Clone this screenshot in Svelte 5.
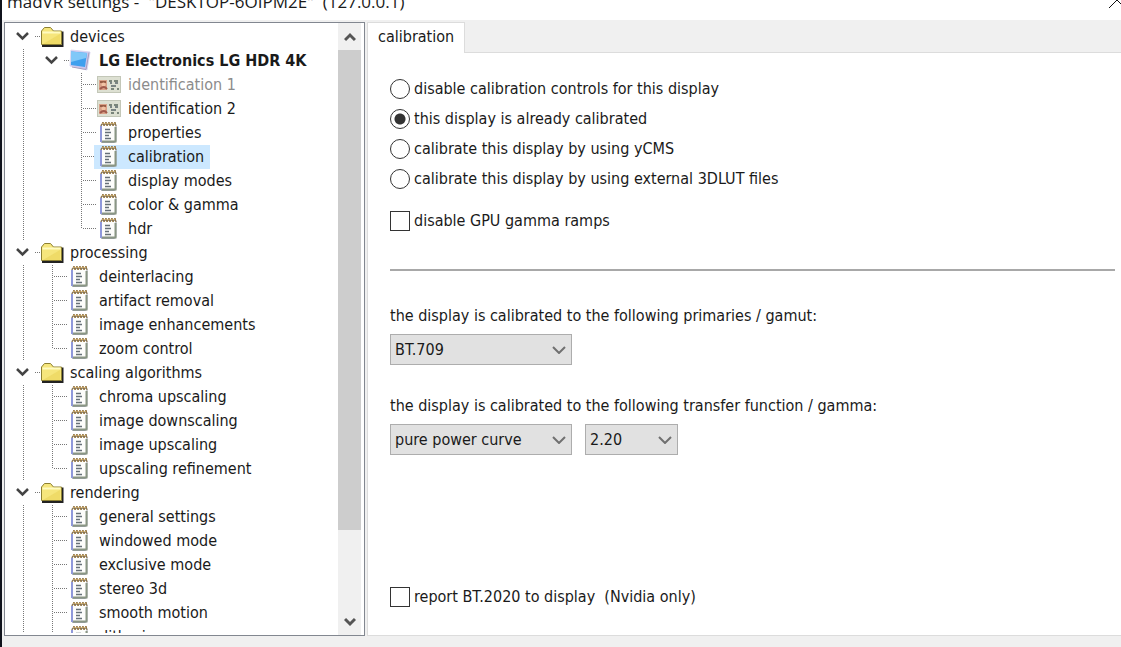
<script>
	const tree = [
		{ label: 'devices', icon: 'folder', guides: ['open'] },
		{ label: 'LG Electronics LG HDR 4K', icon: 'display', guides: ['line', 'open'], bold: true },
		{ label: 'identification 1', icon: 'card', guides: ['line', 'blank', 'tee'], muted: true },
		{ label: 'identification 2', icon: 'card', guides: ['line', 'blank', 'tee'] },
		{ label: 'properties', icon: 'page', guides: ['line', 'blank', 'tee'] },
		{ label: 'calibration', icon: 'page', guides: ['line', 'blank', 'tee'] },
		{ label: 'display modes', icon: 'page', guides: ['line', 'blank', 'tee'] },
		{ label: 'color & gamma', icon: 'page', guides: ['line', 'blank', 'tee'] },
		{ label: 'hdr', icon: 'page', guides: ['line', 'blank', 'end'] },
		...group('processing', ['deinterlacing', 'artifact removal', 'image enhancements', 'zoom control']),
		...group('scaling algorithms', [
			'chroma upscaling',
			'image downscaling',
			'image upscaling',
			'upscaling refinement'
		]),
		...group('rendering', [
			'general settings',
			'windowed mode',
			'exclusive mode',
			'stereo 3d',
			'smooth motion',
			'dithering'
		])
	];

	const modes = [
		'disable calibration controls for this display',
		'this display is already calibrated',
		'calibrate this display by using yCMS',
		'calibrate this display by using external 3DLUT files'
	];

	let selected = $state('calibration');
	let mode = $state(modes[1]);
	let disableRamps = $state(false);
	let reportBt2020 = $state(false);
	let gamut = $state('BT.709');
	let curve = $state('pure power curve');
	let gamma = $state('2.20');

	function group(label, children) {
		return [
			{ label, icon: 'folder', guides: ['open'] },
			...children.map((child, i) => ({
				label: child,
				icon: 'page',
				guides: ['line', i === children.length - 1 ? 'end' : 'tee']
			}))
		];
	}
</script>

{#snippet guide(kind)}
	<svg class="guide" viewBox="0 0 29 24" aria-hidden="true">
		{#if kind === 'open'}
			<path class="chevron" d="M10 8l5.500 5.500 5.500-5.500" />
			<path class="dots" d="M28 11.500h5" />
		{:else if kind === 'line'}
			<path class="dots" d="M16.500 0v24" />
		{:else if kind === 'tee'}
			<path class="dots" d="M16.500 0v24M18 11.500h14" />
		{:else if kind === 'end'}
			<path class="dots" d="M16.500 0v12M18 11.500h14" />
		{/if}
	</svg>
{/snippet}

{#snippet icon(kind)}
	<svg class="icon" viewBox="0 0 32 24" aria-hidden="true">
		{#if kind === 'folder'}
			<path d="M6 21h20.500V6.500" fill="none" stroke="#222" stroke-width="2" />
			<path d="M5.500 19.500V6l3-3.500h6l3 3.500h8v13.500z" fill="#f6e67c" stroke="#8c8032" />
			<path d="M6.500 7.500h18" stroke="#fffbc0" stroke-width="2" />
			<path d="M7 19l17-10v10z" fill="#e8d052" opacity="0.5" />
		{:else if kind === 'display'}
			<path d="M6 1l19 2-3 18L5 17z" fill="#c9c6ee" stroke="#dcd8f2" />
			<path d="M6 2.500l16 1.500-2 14L6 16z" fill="#3fa0ee" />
			<path d="M6 2.500l16 1.500-1 5L6 13z" fill="#80c8f8" />
			<path d="M7 18l14 2.500 3-17" fill="none" stroke="#a9a0bd" />
		{:else if kind === 'card'}
			<rect x="3.500" y="3.500" width="23" height="16" fill="#dde0d2" stroke="#c3c7b8" />
			<rect x="5" y="7" width="8" height="10" fill="#d9a188" />
			<path d="M6 8h6v2H6z" fill="#985c45" />
			<circle cx="9.500" cy="11.500" r="2" fill="#f1c3a4" />
			<path d="M6 16q4-4 7 0" fill="none" stroke="#a05a4c" stroke-width="2" />
			<path d="M15 8h3m2 0h4M17 16h3m3 0h2" stroke="#7a857a" stroke-width="2" />
			<path d="M16 10h2m3 0h3M17 13h5" stroke="#59656a" stroke-width="1.500" />
		{:else}
			<path d="M7 3.500h15v17l-2 1H7.500L6.500 20z" fill="#fdfdfb" stroke="#9ba0a8" />
			<path d="M7 5v16" stroke="#8f98da" stroke-width="2" />
			<path d="M21.500 6v14.500H8" fill="none" stroke="#8a9684" stroke-width="2" />
			<path d="M7 5l2-4 1 4 2-4 1 4 2-4 1 4 2-4 1 4 2-4 1 4" fill="none" stroke="#8b6c37" />
			<path d="M8 2.500h13" stroke="#d6b26a" opacity="0.6" />
			<path d="M11 8.500h5M11 11.500h6M11 14.500h4M11 17.500h6" stroke="#667078" stroke-width="1.500" />
		{/if}
	</svg>
{/snippet}

{#snippet arrow()}
	<svg class="arrow" viewBox="0 0 14 8" aria-hidden="true">
		<path d="M1 1l6 6 6-6" />
	</svg>
{/snippet}

<div class="window">
	<header>
		<span>madVR settings -&nbsp; "DESKTOP-6OIPM2E"&nbsp; (127.0.0.1)</span>
		<button class="close" aria-label="Close">
			<svg viewBox="0 0 16 16"><path d="M0 16l8-8 8 8M0 0l8 8 8-8" /></svg>
		</button>
	</header>

	<main>
		<nav>
			<ul>
				{#each tree as item}
					<li>
						{#each item.guides as kind}
							{@render guide(kind)}
						{/each}
						<button
							class="node"
							class:selected={selected === item.label}
							class:bold={item.bold}
							class:muted={item.muted}
							onclick={() => (selected = item.label)}
						>
							{@render icon(item.icon)}
							<span>{item.label}</span>
						</button>
					</li>
				{/each}
			</ul>
			<div class="scrollbar">
				<button aria-label="Scroll up">
					<svg viewBox="0 0 12 10"><path d="M1 8l5-5 5 5" /></svg>
				</button>
				<div class="track"><div class="thumb"></div></div>
				<button aria-label="Scroll down">
					<svg viewBox="0 0 12 10"><path d="M1 2l5 5 5-5" /></svg>
				</button>
			</div>
		</nav>

		<section>
			<div class="tabs">
				<button class="tab">calibration</button>
			</div>
			<form class="panel">
				{#each modes as value}
					<label class="option">
						<input type="radio" name="mode" {value} bind:group={mode} />
						{value}
					</label>
				{/each}
				<label class="option ramps">
					<input type="checkbox" bind:checked={disableRamps} />
					disable GPU gamma ramps
				</label>

				<hr />

				<label class="caption" for="gamut">the display is calibrated to the following primaries / gamut:</label>
				<div class="fields">
					<div class="select wide">
						<select id="gamut" bind:value={gamut}>
							<option>BT.709</option>
							<option>BT.2020</option>
						</select>
						{@render arrow()}
					</div>
				</div>

				<label class="caption" for="curve">the display is calibrated to the following transfer function / gamma:</label>
				<div class="fields">
					<div class="select wide">
						<select id="curve" bind:value={curve}>
							<option>pure power curve</option>
						</select>
						{@render arrow()}
					</div>
					<div class="select">
						<select aria-label="gamma" bind:value={gamma}>
							<option>2.20</option>
							<option>2.40</option>
						</select>
						{@render arrow()}
					</div>
				</div>

				<label class="option report">
					<input type="checkbox" bind:checked={reportBt2020} />
					report BT.2020 to display&nbsp; (Nvidia only)
				</label>
			</form>
		</section>
	</main>
</div>

<style>
	:global(body) {
		margin: 0;
	}

	.window {
		display: flex;
		flex-direction: column;
		height: 100vh;
		box-sizing: border-box;
		border-left: 2px solid #10131c;
		background: #f0f0f0;
		color: #1a1a1a;
		font: 16px/24px Tahoma, 'DejaVu Sans Condensed', sans-serif;
		overflow: hidden;
	}

	button,
	select {
		padding: 0;
		border: 0;
		background: none;
		color: inherit;
		font: inherit;
	}

	header {
		display: flex;
		justify-content: space-between;
		align-items: flex-end;
		height: 20px;
		padding-left: 5px;
		background: #fff;
		font: 17px/36px 'Segoe UI', 'Open Sans', sans-serif;
		white-space: pre;
		overflow: hidden;
	}

	.close {
		align-self: flex-start;
		width: 12px;
		height: 8px;
		overflow: hidden;
	}

	.close svg {
		display: block;
		width: 16px;
		height: 16px;
		margin-top: -8px;
		fill: none;
		stroke: #111;
	}

	main {
		display: flex;
		flex: 1;
		gap: 2px;
		min-height: 0;
		padding: 2px 0 11px 2px;
	}

	nav {
		display: flex;
		flex: none;
		width: 359px;
		border: 1px solid #828790;
		background: #fff;
	}

	ul {
		flex: 1;
		margin: 0 0 2px;
		padding: 2px 0 0 2px;
		list-style: none;
		overflow: hidden;
	}

	li {
		display: flex;
		height: 24px;
	}

	.guide {
		flex: none;
		width: 29px;
		height: 24px;
		fill: none;
		overflow: visible;
	}

	.dots {
		stroke: #777;
		stroke-dasharray: 1 1;
	}

	.chevron {
		stroke: #444;
		stroke-width: 2.5;
	}

	.node {
		display: flex;
		padding-right: 6px;
		white-space: nowrap;
	}

	.icon {
		width: 32px;
		height: 24px;
		margin-right: 2px;
	}

	.selected {
		background: #cce8ff;
	}

	.bold {
		font-weight: bold;
	}

	.muted {
		color: #8c8c8c;
	}

	.scrollbar {
		display: flex;
		flex-direction: column;
		width: 23px;
		margin-right: 3px;
		background: #f0f0f0;
	}

	.scrollbar button {
		display: grid;
		place-items: center;
		height: 27px;
	}

	.scrollbar svg {
		width: 12px;
		height: 10px;
		fill: none;
		stroke: #555;
		stroke-width: 3;
	}

	.track {
		flex: 1;
	}

	.thumb {
		height: 86%;
		background: #cdcdcd;
	}

	section {
		display: flex;
		flex: 1;
		flex-direction: column;
		min-width: 0;
	}

	.tabs {
		display: flex;
		height: 30px;
		border-bottom: 1px solid #dcdcdc;
	}

	.tab {
		height: 31px;
		padding: 0 10px 2px;
		border: 1px solid #dcdcdc;
		border-bottom: 0;
		background: #fff;
	}

	.panel {
		flex: 1;
		padding: 21px 6px 0 22px;
		border: 1px solid #dcdcdc;
		border-width: 0 0 1px 1px;
		background: #fff;
	}

	.option {
		display: flex;
		align-items: center;
		gap: 4px;
		width: max-content;
		height: 30px;
	}

	.option input {
		appearance: none;
		width: 20px;
		height: 20px;
		margin: 0;
		border: 1px solid #333;
		background: #fff;
	}

	.option input[type='radio'] {
		border-radius: 50%;
	}

	.option input[type='radio']:checked {
		background: radial-gradient(circle, #333 5px, #fff 6px);
	}

	.option input[type='checkbox']:checked {
		background: #333;
		box-shadow: inset 0 0 0 4px #fff;
	}

	.ramps {
		margin-top: 12px;
	}

	hr {
		height: 2px;
		margin: 33px 0;
		border: 0;
		background: #a8a8a8;
	}

	.caption {
		display: block;
		height: 30px;
	}

	.fields {
		display: flex;
		gap: 13px;
		margin-bottom: 29px;
	}

	.select {
		display: grid;
		align-items: center;
		width: 93px;
		height: 31px;
	}

	.wide {
		width: 182px;
	}

	.select > :global(*) {
		grid-area: 1 / 1;
	}

	select {
		appearance: none;
		width: 100%;
		height: 100%;
		padding: 0 24px 0 4px;
		border: 1px solid #adadad;
		border-radius: 0;
		background: #e1e1e1;
	}

	.arrow {
		justify-self: end;
		width: 14px;
		height: 8px;
		margin-right: 6px;
		fill: none;
		stroke: #707070;
		stroke-width: 2;
		pointer-events: none;
	}

	.report {
		margin-top: 127px;
	}
</style>
